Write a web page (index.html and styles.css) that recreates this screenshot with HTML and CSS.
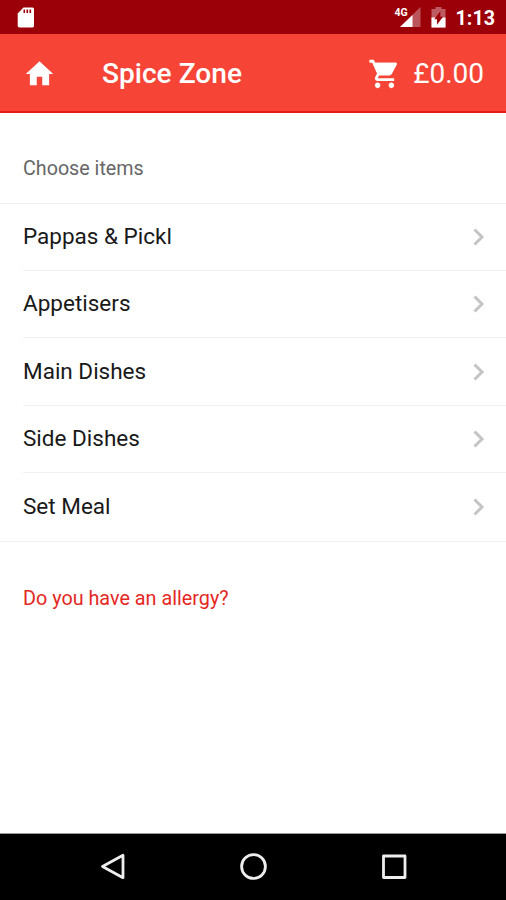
FILE: index.html
```html
<!DOCTYPE html>
<html lang="en">
<head>
<meta charset="utf-8">
<title>Spice Zone</title>
<link rel="stylesheet" href="styles.css">
</head>
<body>
<div class="screen">
  <div class="status">
    <svg class="sd" width="18" height="22" viewBox="0 0 18 22"><path fill="#fff" d="M6.500.5H15.500Q17 .5 17 2V18.500Q17 20.500 15.500 20.500H2.500Q.7 20.500.7 18.500V6.500Z"/><path stroke="#9b0008" stroke-width="1.600" d="M7.300 2.500V6M10.300 2.500V6M13.300 2.500V6"/></svg>
    <span class="net">4G</span>
    <svg class="signal" width="21" height="21" viewBox="0 0 21 21"><path fill="#bb555b" d="M20.500 0V20H0Z"/><path fill="#fff" d="M12.500 8V20H0Z"/></svg>
    <svg class="battery" width="15" height="21" viewBox="0 0 15 21"><path fill="#bd5b61" d="M4.500 0H10.500V2H14.500V20.500H.5V2H4.500Z"/><path fill="#fff" d="M.5 10.500H14.500V20.500H.5Z"/><path fill="#9b0008" d="M9.300 4.200V9.800H12L6 17.800V12.200H3.200Z"/></svg>
    <span class="clock">1:13</span>
  </div>
  <header class="bar">
    <svg class="home" width="33" height="34" viewBox="0 0 24 24" preserveAspectRatio="none"><path fill="#fff" d="M10 20v-6h4v6h5v-8h3L12 3 2 12h3v8z"/></svg>
    <h1 class="title">Spice Zone</h1>
    <svg class="cart" width="33" height="34" viewBox="0 0 24 24" preserveAspectRatio="none"><path fill="#fff" d="M5 4H21L16.500 12.500H8.500Z"/><path fill="#fff" d="M7 18c-1.100 0-1.990.9-1.990 2S5.900 22 7 22s2-.9 2-2-.9-2-2-2zM1 2v2h2l3.600 7.590-1.350 2.450c-.16.280-.25.610-.25.960 0 1.100.9 2 2 2h12v-2H7.420c-.14 0-.25-.11-.25-.25l.03-.12.900-1.630h7.450c.75 0 1.410-.41 1.750-1.030l3.580-6.490c.08-.14.120-.31.120-.48 0-.55-.45-1-1-1H5.210l-.94-2H1zm16 16c-1.100 0-1.990.9-1.990 2s.89 2 1.990 2 2-.9 2-2-.9-2-2-2z"/></svg>
    <span class="total">£0.00</span>
  </header>
  <main class="content">
    <h2 class="heading">Choose items</h2>
    <ul class="list">
      <li class="item"><span>Pappas &amp; Pickl</span><svg class="chev" width="12" height="18" viewBox="0 0 12 18"><path d="M1.500 1.500 9 9 1.500 16.500"/></svg></li>
      <li class="item"><span>Appetisers</span><svg class="chev" width="12" height="18" viewBox="0 0 12 18"><path d="M1.500 1.500 9 9 1.500 16.500"/></svg></li>
      <li class="item"><span>Main Dishes</span><svg class="chev" width="12" height="18" viewBox="0 0 12 18"><path d="M1.500 1.500 9 9 1.500 16.500"/></svg></li>
      <li class="item"><span>Side Dishes</span><svg class="chev" width="12" height="18" viewBox="0 0 12 18"><path d="M1.500 1.500 9 9 1.500 16.500"/></svg></li>
      <li class="item"><span>Set Meal</span><svg class="chev" width="12" height="18" viewBox="0 0 12 18"><path d="M1.500 1.500 9 9 1.500 16.500"/></svg></li>
    </ul>
    <a class="allergy">Do you have an allergy?</a>
  </main>
  <nav class="nav">
    <svg width="28" height="30" viewBox="0 0 28 30"><path d="M24 3.300V25.700L3.500 14.500Z"/></svg>
    <svg width="28" height="30" viewBox="0 0 28 30"><circle cx="13.500" cy="14.500" r="11.900"/></svg>
    <svg width="28" height="30" viewBox="0 0 28 30"><path d="M3.500 4H25V25.500H3.500Z"/></svg>
  </nav>
</div>
</body>
</html>
```
FILE: styles.css
```css
* { box-sizing: border-box; }
body { margin: 0; background: #fff; font-family: Roboto, sans-serif; }
svg { display: block; flex: none; }
.screen { width: 506px; height: 900px; display: flex; flex-direction: column; overflow: hidden; }
.status { height: 34px; flex: none; background: #9b0008; display: flex; align-items: flex-start; color: #fff; padding: 7px 11px 0 17px; }
.net { margin-left: auto; font-size: 10.500px; line-height: 11px; font-weight: 700; margin-right: -8px; }
.signal { margin-right: 10px; }
.battery { margin-right: 10px; }
.clock { font-size: 19.700px; line-height: 23px; font-weight: 700; }
.bar { height: 79px; flex: none; background: #f64436; border-bottom: 2px solid #e51b18; display: flex; align-items: center; color: #fff; padding: 2px 22px 0 23px; }
.title { margin: 0 auto 0 46px; padding-top: 1px; font-size: 28.100px; line-height: 32px; font-weight: 500; }
.cart { margin-right: 12px; }
.total { padding-top: 1px; font-size: 28px; line-height: 32px; }
.content { flex: 1; }
.heading { margin: 0; height: 90px; padding: 43px 23px 0; font-size: 19.700px; line-height: 25px; font-weight: 400; color: #666; }
.list { list-style: none; margin: 0; padding: 0 0 0 23px; border-top: 1px solid #f0f0f0; border-bottom: 1px solid #f0f0f0; }
.item { height: 67.500px; display: flex; align-items: center; justify-content: space-between; padding: 0 21px 1px 0; font-size: 22.500px; color: #191919; border-bottom: 1px solid #f0f0f0; }
.item:first-child { height: 66.500px; }
.item:last-child { height: 67.500px; border-bottom: 0; }
.chev { margin-top: 2px; }
.chev path { fill: none; stroke: #c4c4c4; stroke-width: 3; }
.allergy { display: block; padding: 45px 23px 0; font-size: 19.800px; line-height: 24px; color: #e5281f; }
.nav { height: 67px; flex: none; background: #000; border-top: 1px solid #999; display: flex; justify-content: space-between; align-items: center; padding: 0 98px 0 99px; }
.nav path, .nav circle { fill: none; stroke: #eee; stroke-width: 2.800; stroke-linejoin: round; }
```
